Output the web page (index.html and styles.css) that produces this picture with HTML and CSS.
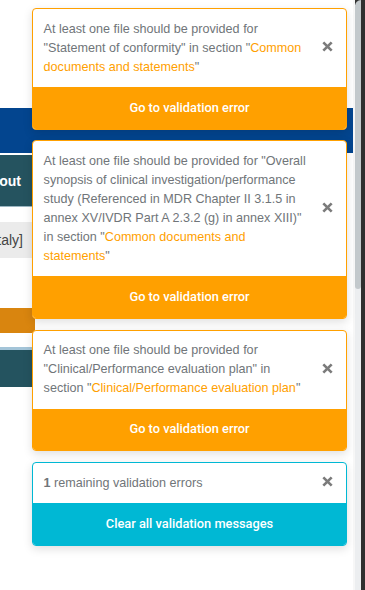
FILE: index.html
```html
<!DOCTYPE html>
<html lang="en">
<head>
<meta charset="utf-8">
<title>Validation errors</title>
<link rel="stylesheet" href="styles.css">
</head>
<body>
<div class="window">
  <main class="page">
    <div class="navband"></div>
    <div class="header"><span class="header-text">Logout</span></div>
    <div class="field"><span class="field-text">[Italy]</span></div>
    <div class="warnbar"></div>
    <div class="tealbar"></div>
  </main>
  <div class="scrollbar"><div class="thumb"></div></div>
  <div class="frame"></div>
</div>

<div class="toasts">
  <div class="toast warning">
    <div class="toast-body">
      <p class="msg">At least one file should be provided for "Statement of conformity" in section "<span class="link">Common documents and statements</span>"</p>
      <button class="close" aria-label="Close"><svg viewBox="0 0 10 10" width="11" height="11"><path d="M1.2 1.2 L8.8 8.8 M8.8 1.2 L1.2 8.8"/></svg></button>
    </div>
    <div class="toast-action">Go to validation error</div>
  </div>

  <div class="toast warning">
    <div class="toast-body">
      <p class="msg">At least one file should be provided for "Overall synopsis of clinical investigation/performance study (Referenced in MDR Chapter II 3.1.5 in annex XV/IVDR Part A 2.3.2 (g) in annex XIII)" in section "<span class="link">Common documents and statements</span>"</p>
      <button class="close" aria-label="Close"><svg viewBox="0 0 10 10" width="11" height="11"><path d="M1.2 1.2 L8.8 8.8 M8.8 1.2 L1.2 8.8"/></svg></button>
    </div>
    <div class="toast-action">Go to validation error</div>
  </div>

  <div class="toast warning">
    <div class="toast-body">
      <p class="msg">At least one file should be provided for "Clinical/Performance evaluation plan" in section "<span class="link">Clinical/Performance evaluation plan</span>"</p>
      <button class="close" aria-label="Close"><svg viewBox="0 0 10 10" width="11" height="11"><path d="M1.2 1.2 L8.8 8.8 M8.8 1.2 L1.2 8.8"/></svg></button>
    </div>
    <div class="toast-action">Go to validation error</div>
  </div>

  <div class="toast info">
    <div class="toast-body">
      <p class="msg"><strong>1</strong> remaining validation errors</p>
      <button class="close" aria-label="Close"><svg viewBox="0 0 10 10" width="11" height="11"><path d="M1.2 1.2 L8.8 8.8 M8.8 1.2 L1.2 8.8"/></svg></button>
    </div>
    <div class="toast-action">Clear all validation messages</div>
  </div>
</div>
</body>
</html>
```

FILE: styles.css
```css
* { box-sizing: border-box; }

html, body {
  margin: 0;
  padding: 0;
  width: 365px;
  height: 590px;
  overflow: hidden;
  font-family: "Liberation Sans", Arial, sans-serif;
  background: #ffffff;
}

.window {
  display: flex;
  width: 365px;
  height: 590px;
}

.page {
  flex: 1;
  background: #ffffff;
  padding-top: 108px;
  display: flex;
  flex-direction: column;
  overflow: hidden;
}

.navband {
  height: 45px;
  background: #03458f;
}

.header {
  margin-top: 2px;
  height: 52px;
  background: #25535f;
  border-bottom: 1px solid #9bb6c2;
  width: 32px;
  display: flex;
  align-items: center;
  justify-content: flex-end;
  padding-right: 11px;
  overflow: hidden;
}

.header-text {
  color: #ffffff;
  font-weight: 700;
  font-size: 14px;
  white-space: nowrap;
}

.field {
  margin-top: 15px;
  height: 36px;
  width: 40px;
  background: #ebebeb;
  display: flex;
  align-items: center;
  justify-content: flex-end;
  padding-right: 17px;
  overflow: hidden;
}

.field-text {
  color: #444;
  font-size: 14px;
  white-space: nowrap;
}

.warnbar {
  margin-top: 50px;
  height: 25px;
  width: 35px;
  background: #d9850f;
}

.tealbar {
  margin-top: 14px;
  height: 40px;
  width: 40px;
  background: #24535f;
  border-top: 3px solid #a3c4d8;
}

.scrollbar {
  width: 8px;
  background: linear-gradient(#333 0 5px, #eceef0 5px);
  border-left: 2px solid #f7f7f7;
}

.thumb {
  height: 289px;
  background: #c3c9cc;
  border-radius: 6px 0 3px 3px;
}

.frame {
  width: 4px;
  background: #303030;
}

/* toasts overlay */
.toasts {
  position: absolute;
  top: 8px;
  left: 32px;
  width: 315px;
  display: flex;
  flex-direction: column;
  gap: 10.6px;
}

.toast {
  border: 1px solid #ffa000;
  border-radius: 4px;
  overflow: hidden;
  background: #ffffff;
  box-shadow: 0 3px 10px rgba(0, 0, 0, 0.13);
}

.toast.info { border-color: #00b8d4; }

.toast-body {
  display: flex;
  align-items: center;
  padding: 10.8px 11px 10.8px 10.6px;
  gap: 11px;
}

.msg {
  flex: 1;
  margin: 0;
  font-size: 12.6px;
  line-height: 18.9px;
  color: #707579;
}

.msg strong { font-weight: 700; }

.link { color: #ffa000; }

.close {
  flex: none;
  width: 16px;
  height: 16px;
  margin-top: -3px;
  padding: 0;
  border: 0;
  background: none;
  display: flex;
  align-items: center;
  justify-content: center;
}

.close svg path {
  stroke: #7c7c7c;
  stroke-width: 2.4;
  fill: none;
}

.toast-action {
  background: #ffa000;
  color: #ffffff;
  font-family: Roboto, "Liberation Sans", Arial, sans-serif;
  font-size: 12.8px;
  line-height: 18.9px;
  font-weight: 500;
  text-align: center;
  padding: 11.4px 10px 11.2px;
}

.toast.info .toast-action { background: #00b8d4; }
```
